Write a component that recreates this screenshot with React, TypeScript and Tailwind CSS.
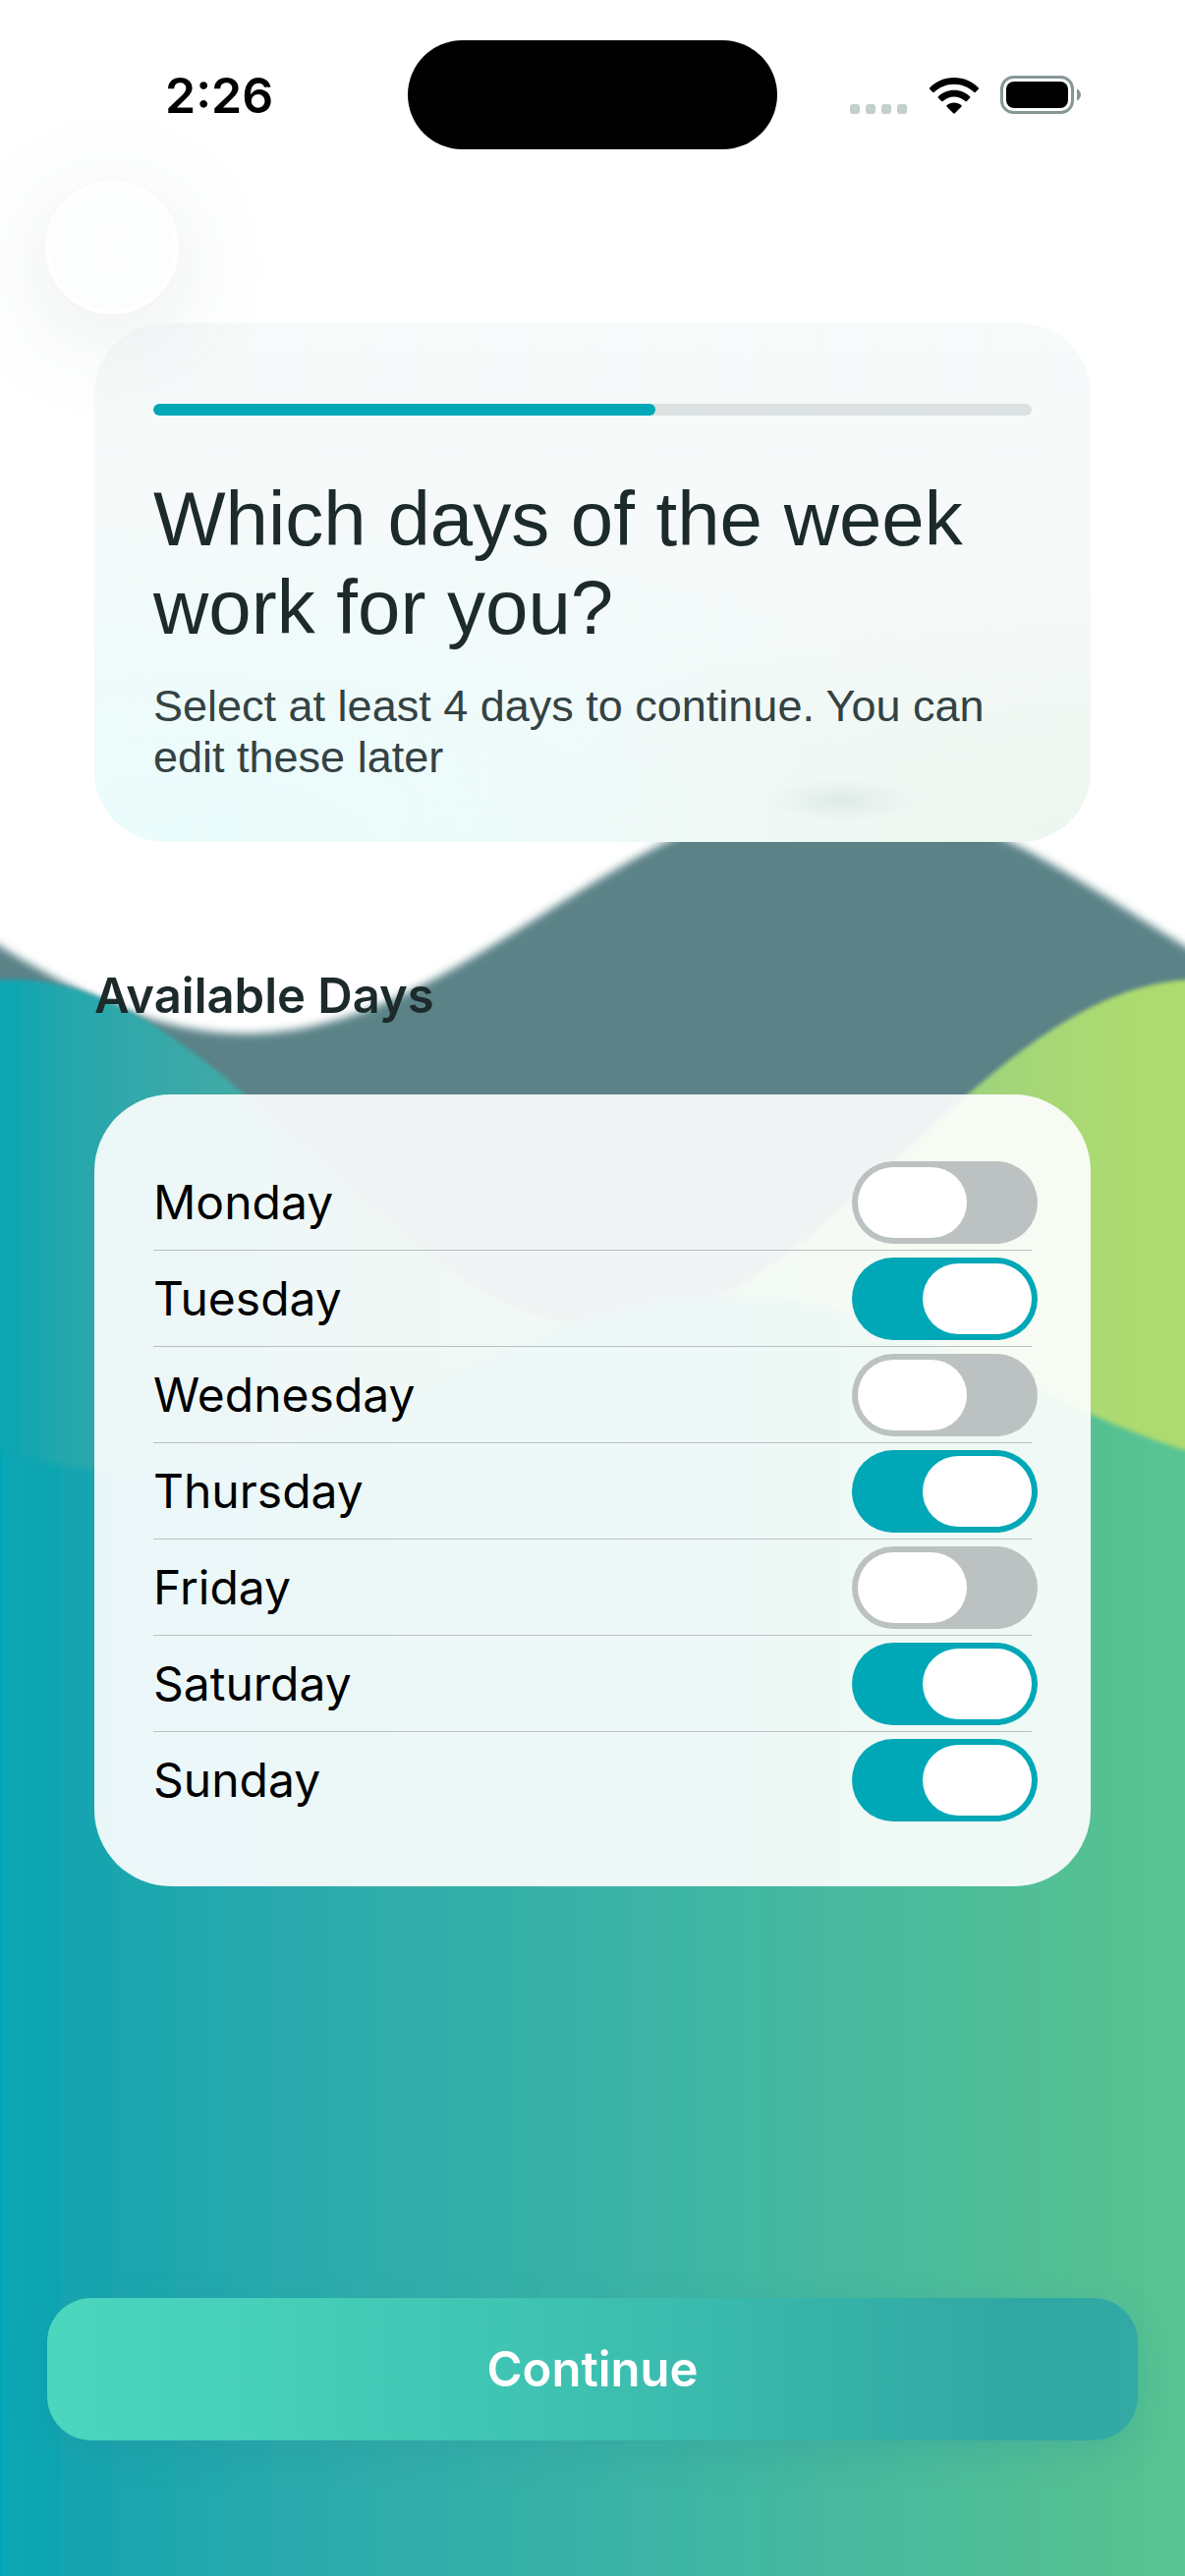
import React, { useState } from "react";

const initialDays = [
  { name: "Monday", selected: false },
  { name: "Tuesday", selected: true },
  { name: "Wednesday", selected: false },
  { name: "Thursday", selected: true },
  { name: "Friday", selected: false },
  { name: "Saturday", selected: true },
  { name: "Sunday", selected: true },
];

// One full sine period across the width, filled down to the bottom edge
const wavePath = (center: number, amplitude: number, troughX: number) => {
  const points: string[] = [];
  for (let x = -30; x <= 1236; x += 6) {
    const y = center + amplitude * Math.cos((2 * Math.PI * (x - troughX)) / 1206);
    points.push(`${x} ${y.toFixed(1)}`);
  }
  return `M${points.join("L")}L1236 2660L-30 2660Z`;
};

const WaveBackground = () => (
  <svg
    aria-hidden="true"
    className="absolute inset-0 w-full h-full"
    viewBox="0 0 1206 2622"
    preserveAspectRatio="none"
  >
    <defs>
      <linearGradient id="lime" gradientUnits="userSpaceOnUse" x1="0" y1="0" x2="1206" y2="0">
        <stop offset="0" stopColor="#0aa6b3" />
        <stop offset="0.06" stopColor="#26a7ac" />
        <stop offset="0.2" stopColor="#43aaa6" />
        <stop offset="0.82" stopColor="#a0d47c" />
        <stop offset="0.93" stopColor="#abda72" />
        <stop offset="1" stopColor="#aedb6e" />
      </linearGradient>
      <linearGradient id="teal" gradientUnits="userSpaceOnUse" x1="0" y1="0" x2="1206" y2="0">
        <stop offset="0" stopColor="#06a6b4" />
        <stop offset="0.08" stopColor="#18a5af" />
        <stop offset="0.25" stopColor="#2baaac" />
        <stop offset="0.5" stopColor="#39b3a7" />
        <stop offset="0.75" stopColor="#4aba9c" />
        <stop offset="0.93" stopColor="#55c193" />
        <stop offset="1" stopColor="#5ac493" />
      </linearGradient>
      <filter id="soft" x="-5%" y="-5%" width="110%" height="110%">
        <feGaussianBlur stdDeviation="4" />
      </filter>
      <filter id="softer" x="-5%" y="-5%" width="110%" height="110%">
        <feGaussianBlur stdDeviation="2" />
      </filter>
    </defs>
    <path d={wavePath(931, 121, 250)} fill="#5a8287" filter="url(#soft)" />
    <path d={wavePath(1174, 177, 617)} fill="url(#lime)" filter="url(#softer)" />
    <path d={wavePath(1408, 90, 137)} fill="url(#teal)" filter="url(#softer)" />
  </svg>
);

const StatusBar = () => (
  <div className="grid grid-cols-[1fr_376px_1fr] items-center pt-[41px] text-black">
    <span className="pl-[168px] text-[50px] leading-[60px] font-semibold">2:26</span>
    <div className="h-[111px] rounded-full bg-black" />
    <svg className="ml-[74px] w-[236px] h-[40px]" viewBox="0 0 236 40" fill="none">
      <g fill="#c3cfcc">
        <rect x="0" y="29" width="10" height="10" rx="3" />
        <rect x="16" y="29" width="10" height="10" rx="3" />
        <rect x="32" y="29" width="10" height="10" rx="3" />
        <rect x="48" y="29" width="10" height="10" rx="3" />
      </g>
      <g fill="#000">
        <path d="M106 2C96 2 87.500 6 81.200 12.200Q80.400 13 81.200 13.800L84.200 16.800Q85 17.600 85.800 16.800C91.200 11.800 98 8.700 106 8.700S120.800 11.800 126.200 16.800Q127 17.600 127.800 16.800L130.800 13.800Q131.600 13 130.800 12.200C124.500 6 116 2 106 2Z" />
        <path d="M106 14.800C99.500 14.800 94 17.300 89.900 21.200Q89.100 22 89.900 22.800L93.100 25.900Q93.900 26.700 94.700 26C97.700 23.300 101.500 21.500 106 21.500S114.300 23.300 117.300 26Q118.100 26.700 118.900 25.900L122.100 22.800Q122.900 22 122.100 21.200C118 17.300 112.500 14.800 106 14.800Z" />
        <path d="M106 27.500C103.100 27.500 100.600 28.500 98.700 30.100Q97.800 30.900 98.700 31.800L105.200 38.300Q106 39.100 106.800 38.300L113.300 31.800Q114.200 30.900 113.300 30.100C111.400 28.500 108.900 27.500 106 27.500Z" />
      </g>
      <rect x="154.500" y="1.500" width="72" height="36" rx="12" stroke="#869798" strokeWidth="3" />
      <rect x="159" y="6" width="63" height="27" rx="8" fill="#000" />
      <path d="M231 13.500C233.500 14.500 235 17 235 19.500S233.500 24.500 231 25.500Z" fill="#869798" />
    </svg>
  </div>
);

const App = () => {
  const [days, setDays] = useState(initialDays);

  const toggleDay = (name: string) => {
    setDays(days.map((day) => (day.name === name ? { ...day, selected: !day.selected } : day)));
  };

  return (
    <div className="relative min-h-screen overflow-hidden bg-white font-['Inter','Liberation_Sans',sans-serif]">
      <WaveBackground />
      <div className="relative min-h-screen flex flex-col">
        <StatusBar />

        <button
          type="button"
          aria-label="Back"
          className="relative z-10 mt-8 ml-[46px] w-[136px] h-[136px] pr-2 rounded-full bg-[#fcfdfd] border-4 border-white flex items-center justify-center shadow-[0_20px_110px_rgba(50,90,100,0.12)]"
        >
          <svg className="w-[28px] h-[48px]" viewBox="0 0 28 48" fill="none">
            <path
              d="M24 4L5 24L24 44"
              stroke="#fff"
              strokeWidth="7"
              strokeLinecap="round"
              strokeLinejoin="round"
            />
          </svg>
        </button>

        <main className="px-24 mt-[9px]">
          <section className="h-[528px] rounded-[72px] px-[60px] pt-[82px] font-['Liberation_Sans',sans-serif] bg-[radial-gradient(75px_22px_at_75%_92%,rgba(212,226,223,0.6),transparent),radial-gradient(60%_50%_at_100%_100%,#edf6ef,transparent),radial-gradient(90%_70%_at_10%_100%,#eafcfc,transparent),linear-gradient(#f7fafa,#f4f9f8)]">
            <div
              role="progressbar"
              aria-label="Setup progress"
              aria-valuenow={4}
              aria-valuemax={7}
              className="h-3 rounded-full bg-[#dce1e1] overflow-hidden"
            >
              <div className="h-full w-4/7 rounded-full bg-[#00a8b7]" />
            </div>
            <h1 className="mt-[60px] text-[78px] leading-[90px] text-[#1c2a2b]">
              Which days of the week work for you?
            </h1>
            <p className="mt-[30px] text-[45px] leading-[52px] text-[#344243]">
              Select at least 4 days to continue. You can edit these later
            </p>
          </section>

          <h2 className="mt-[127px] text-[49px] leading-[60px] font-semibold text-[#1c2a2b]">
            Available Days
          </h2>

          <section className="mt-[70px] rounded-[78px] p-[60px] bg-white/91">
            {days.map((day) => (
              <div
                key={day.name}
                className="h-[98px] flex items-center justify-between border-t border-[#b9c1c2] first:border-transparent"
              >
                <label htmlFor={day.name} className="text-[48px] leading-[60px] text-black">
                  {day.name}
                </label>
                <input
                  id={day.name}
                  type="checkbox"
                  role="switch"
                  checked={day.selected}
                  onChange={() => toggleDay(day.name)}
                  className="appearance-none -mr-1.5 w-[189px] h-[84px] p-1.5 rounded-full bg-[#bcc2c2] checked:bg-[#00a8b7] before:block before:w-[111px] before:h-[72px] before:rounded-full before:bg-white checked:before:ml-auto"
                />
              </div>
            ))}
          </section>
        </main>

        <footer className="mt-auto px-12 pb-[138px]">
          <button
            type="button"
            className="w-full h-[145px] rounded-[45px] text-[49px] font-semibold text-white bg-[linear-gradient(90deg,#4bd6be,#46cfb9_20%,#3dbfb0_52%,#2fa7a3_90%,#32a9a4)] shadow-[0_12px_36px_rgba(40,140,150,0.25)]"
          >
            Continue
          </button>
        </footer>
      </div>
    </div>
  );
};

export default App;
